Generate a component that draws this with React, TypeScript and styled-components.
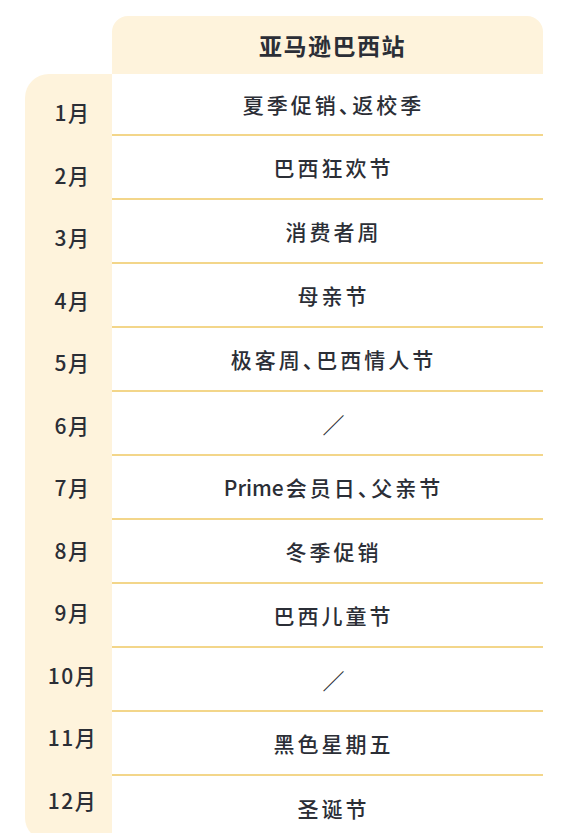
import styled, { createGlobalStyle } from "styled-components";

const GlobalStyle = createGlobalStyle`
  html, body {
    margin: 0;
    padding: 0;
    background: #ffffff;
    overflow: hidden;
  }
  body {
    font-family: "Noto Sans CJK SC", "Noto Sans", sans-serif;
    color: #2b2e36;
  }
`;

type Row = { month: string; event: string; latin?: string; empty?: boolean };

const rows: Row[] = [
  { month: "1月", event: "夏季促销、返校季" },
  { month: "2月", event: "巴西狂欢节" },
  { month: "3月", event: "消费者周" },
  { month: "4月", event: "母亲节" },
  { month: "5月", event: "极客周、巴西情人节" },
  { month: "6月", event: "／", empty: true },
  { month: "7月", latin: "Prime", event: "会员日、父亲节" },
  { month: "8月", event: "冬季促销" },
  { month: "9月", event: "巴西儿童节" },
  { month: "10月", event: "／", empty: true },
  { month: "11月", event: "黑色星期五" },
  { month: "12月", event: "圣诞节" },
];

const Page = styled.div`
  width: 574px;
  height: 833px;
  box-sizing: border-box;
  padding: 16px 31px 0 25px;
`;

const Table = styled.div`
  display: grid;
  grid-template-columns: 87px 1fr;
  grid-template-rows: 58px auto;
`;

const Corner = styled.div``;

const Header = styled.div`
  background: #fef3dc;
  border-radius: 16px 16px 0 0;
  display: flex;
  align-items: center;
  justify-content: center;
  padding-left: 10px;
  font-size: 23px;
  font-weight: 700;
  letter-spacing: 1.5px;
`;

const MonthColumn = styled.div`
  background: #fef3dc;
  border-radius: 24px 0 0 22px;
  padding: 7px 0 8px 8px;
  display: flex;
  flex-direction: column;
`;

const MonthCell = styled.div`
  height: 62.5px;
  display: flex;
  align-items: center;
  justify-content: center;
  font-size: 21px;
  font-weight: 500;
  letter-spacing: 1.5px;
`;

const EventColumn = styled.div`
  display: flex;
  flex-direction: column;
`;

const EventRow = styled.div<{ $first: boolean; $last: boolean }>`
  height: ${(p) => (p.$first ? 62 : 64)}px;
  box-sizing: border-box;
  border-bottom: ${(p) => (p.$last ? "none" : "2px solid #f3d68a")};
  display: flex;
  align-items: center;
  justify-content: center;
  padding-left: 12px;
  font-size: 21px;
  font-weight: 500;
  letter-spacing: 3px;
  font-feature-settings: "halt";
`;

const Latin = styled.span`
  letter-spacing: 0;
  margin-right: 2px;
`;

const Slash = styled.span`
  font-weight: 400;
  font-size: 22px;
  letter-spacing: 0;
`;

export default function App() {
  return (
    <>
      <GlobalStyle />
      <Page>
        <Table>
          <Corner />
          <Header>亚马逊巴西站</Header>
          <MonthColumn>
            {rows.map((r) => (
              <MonthCell key={r.month}>{r.month}</MonthCell>
            ))}
          </MonthColumn>
          <EventColumn>
            {rows.map((r, i) => (
              <EventRow
                key={r.month}
                $first={i === 0}
                $last={i === rows.length - 1}
              >
                {r.empty ? (
                  <Slash>{r.event}</Slash>
                ) : (
                  <>
                    {r.latin && <Latin>{r.latin}</Latin>}
                    {r.event}
                  </>
                )}
              </EventRow>
            ))}
          </EventColumn>
        </Table>
      </Page>
    </>
  );
}
